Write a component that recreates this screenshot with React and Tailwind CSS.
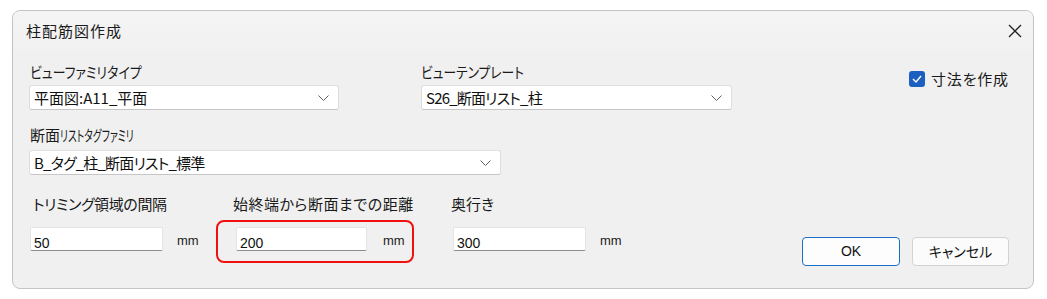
import React from 'react';

const jp = "[font-family:'Noto_Sans_CJK_JP',sans-serif] [font-feature-settings:'palt']";

function Chevron() {
    return (
        <svg width="11" height="6" viewBox="0 0 11 6" fill="none">
            <polyline points="0.5,0.5 5.5,5.5 10.5,0.5" stroke="#606060" strokeWidth="1" />
        </svg>
    );
}

function Combo({ value, width, tight = '' }) {
    return (
        <div
            className={`flex items-center justify-between h-[25px] bg-white border border-[#dedede] border-b-[#c6c6c6] rounded-[3px] pl-[4px] pr-[9px] ${width}`}
        >
            <span className={`${jp} text-[15px] leading-none text-[#111] ${tight}`}>{value}</span>
            <Chevron />
        </div>
    );
}

function NumField({ value, width }) {
    return (
        <div
            className={`h-[24px] bg-white border border-[#e4e4e4] border-b-[#8c8c8c] rounded-[2px] pl-[3px] pt-[2px] ${width}`}
        >
            <span className="[font-family:'Liberation_Sans',sans-serif] text-[14px] leading-[18px] text-[#111]">{value}</span>
        </div>
    );
}

function Unit() {
    return (
        <span className="[font-family:'Liberation_Sans',sans-serif] text-[13px] leading-[14px] text-[#222]">mm</span>
    );
}

function Label({ children, className = '' }) {
    return (
        <div className={`${jp} text-[15px] leading-[20px] text-[#1a1a1a] whitespace-nowrap ${className}`}>
            {children}
        </div>
    );
}

export default function App() {
    return (
        <div className="w-[1047px] h-[299px] bg-white pt-[10px] pl-[12px]">
            <div className="w-[1022px] h-[279px] border border-[#c4c4c4] rounded-[8px] bg-[#f0f0f0] overflow-hidden flex flex-col">
                {/* title bar */}
                <div className="h-[40px] flex items-center justify-between pl-[13px] pr-[11px] bg-gradient-to-b from-[#f4f4f4] to-[#f1f1f1]">
                    <span className={`${jp} text-[15px] tracking-[1px] text-[#1a1a1a]`}>柱配筋図作成</span>
                    <svg width="14" height="14" viewBox="0 0 14 14">
                        <path d="M1 1 L13 13 M13 1 L1 13" stroke="#222" strokeWidth="1.3" />
                    </svg>
                </div>

                {/* row 1 */}
                <div className="flex items-start pl-[16px] pt-[11px]">
                    <div className="w-[310px]">
                        <Label className="ml-[1px]">
                            <span className="inline-block origin-left scale-x-[0.86]">ビューファミリタイプ</span>
                        </Label>
                        <div className="mt-[3px]">
                            <Combo value="平面図:A11_平面" width="w-[310px]" />
                        </div>
                    </div>
                    <div className="ml-[82px] w-[311px]">
                        <Label>
                            <span className="inline-block origin-left scale-x-[0.85]">ビューテンプレート</span>
                        </Label>
                        <div className="mt-[3px]">
                            <Combo value="S26_断面リスト_柱" width="w-[311px]" tight="tracking-[-0.8px]" />
                        </div>
                    </div>
                    <div className="ml-[177px] mt-[7px] flex items-center gap-[6px]">
                        <div className="w-[16px] h-[16px] rounded-[3px] bg-[#1b5fc1] flex items-center justify-center">
                            <svg width="10" height="8" viewBox="0 0 10 8" fill="none">
                                <polyline points="1,4 4,7 9,1" stroke="white" strokeWidth="1.4" />
                            </svg>
                        </div>
                        <Label className="tracking-[0.8px]">寸法を作成</Label>
                    </div>
                </div>

                {/* row 2 */}
                <div className="pl-[16px] mt-[15px]">
                    <Label className="ml-[1px]">
                        断面<span className="inline-block origin-left scale-x-[0.65]">リストタグファミリ</span>
                    </Label>
                    <div className="mt-[5px]">
                        <Combo value="B_タグ_柱_断面リスト_標準" width="w-[472px]" tight="tracking-[-0.8px]" />
                    </div>
                </div>

                {/* row 3 */}
                <div className="flex items-start pl-[17px] pr-[24px] mt-[19px]">
                    <div className="w-[186px]">
                        <Label className="ml-[3px] tracking-[-0.4px]">トリミング領域の間隔</Label>
                        <div className="mt-[6px] h-[43px] flex items-end pb-[12px]">
                            <NumField value="50" width="w-[133px]" />
                            <span className="ml-[14px]"><Unit /></span>
                        </div>
                    </div>
                    <div className="w-[198px]">
                        <Label className="ml-[17px] tracking-[0.5px]">始終端から断面までの距離</Label>
                        <div className="mt-[6px] h-[43px] border-2 border-[#f01010] rounded-[8px] flex items-end pl-[18px] pb-[10px]">
                            <NumField value="200" width="w-[131px]" />
                            <span className="ml-[16px]"><Unit /></span>
                        </div>
                    </div>
                    <div className="ml-[37px]">
                        <Label>奥行き</Label>
                        <div className="mt-[6px] h-[43px] flex items-end pb-[12px] pl-[2px]">
                            <NumField value="300" width="w-[133px]" />
                            <span className="ml-[14px]"><Unit /></span>
                        </div>
                    </div>
                    <div className="ml-auto mt-[43px] flex gap-[12px]">
                        <div className="w-[98px] h-[29px] rounded-[4px] border border-[#1a6fc9] bg-[#fdfdfd] flex items-center justify-center [font-family:'Liberation_Sans',sans-serif] text-[14px] text-[#111]">
                            OK
                        </div>
                        <div className={`w-[97px] h-[29px] rounded-[4px] border border-[#d2d2d2] bg-[#fbfbfb] flex items-center justify-center ${jp} text-[14px] text-[#111]`}>
                            キャンセル
                        </div>
                    </div>
                </div>
            </div>
        </div>
    );
}
